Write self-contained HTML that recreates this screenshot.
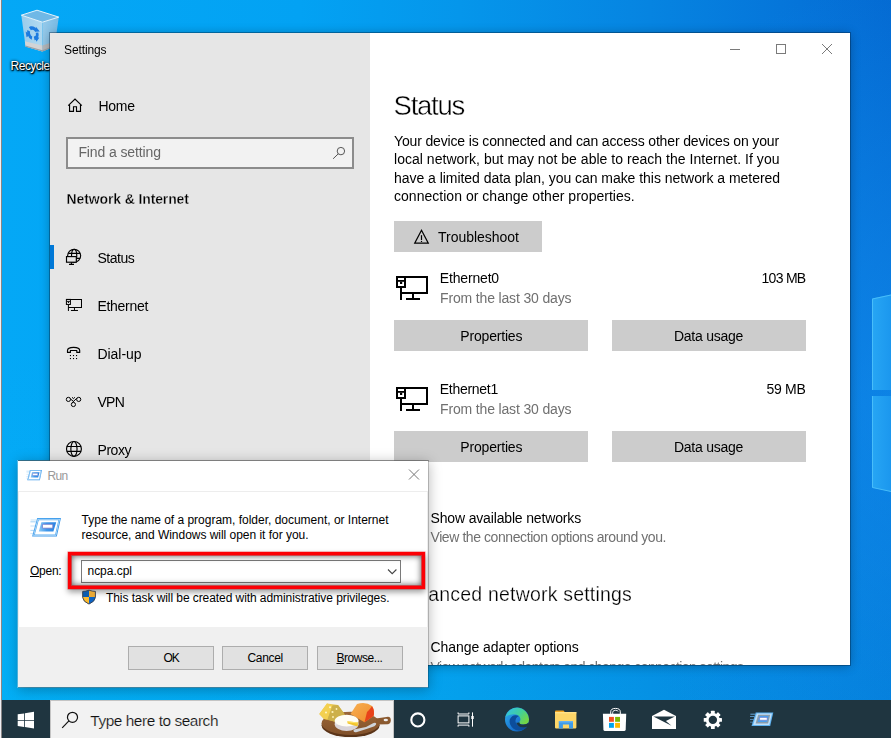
<!DOCTYPE html>
<html><head><meta charset="utf-8"><title>Desktop</title>
<style>
*{box-sizing:border-box;margin:0;padding:0}
html,body{width:891px;height:738px;overflow:hidden}
body{position:relative;font-family:"Liberation Sans",sans-serif;background:#0590e8}
.abs{position:absolute}
.t{position:absolute;white-space:pre;line-height:1;font-family:"Liberation Sans",sans-serif}
#wall{left:0;top:0;width:891px;height:700px;background:linear-gradient(90deg,#04a8f6 0px,#03a2f3 300px,#0596eb 460px,#0684e1 650px,#0574d9 800px,#046ad2 891px)}
#wall2{left:0;top:0;width:891px;height:700px;background:linear-gradient(180deg,rgba(0,0,0,0) 0px,rgba(0,0,0,0) 350px,rgba(0,200,240,0.20) 700px)}
#edge0{left:0;top:0;width:1px;height:738px;background:#f0f0f4}
#edge1{left:1px;top:0;width:1px;height:738px;background:#8a8686}
.pane{background:linear-gradient(90deg,#2aa4f3,#1e98ee);border-left:1px solid #4fc0fa;border-top:1px solid #3fb2f6}
/* Settings window */
#win{left:50px;top:33px;width:800px;height:632px;background:#fff;box-shadow:0 1px 10px rgba(0,0,0,.30),0 0 0 1px rgba(0,30,60,.36);overflow:hidden}
#side{left:0;top:0;width:320px;height:632px;background:#e6e6e6}
#winT{left:0;top:0;width:891px;height:665px;overflow:hidden;clip-path:inset(33px 41px 0px 50px);filter:grayscale(1)}
.btn{background:#ccc}
#sbox{left:66px;top:137px;width:288px;height:31.500px;border:2px solid #8c8c8c;background:#f2f2f2}
/* Run dialog */
#run{left:18px;top:460px;width:411px;padding-left:1px;height:228px;background:#fff;background-clip:padding-box;border:1px solid rgba(0,0,0,.20);border-top-color:rgba(0,0,0,.40);border-left:0;box-shadow:0 2px 12px rgba(0,0,0,.27),-1px 0 0 rgba(255,255,255,.35)}
#runfoot{left:0;top:166px;width:410px;height:60px;background:#f0f0f0}
.rb{background:#e1e1e1;border:1px solid #adadad;height:23.500px;top:646px}
#task{left:0;top:700px;width:891px;height:39px;background:#1f3540}
#tsearch{left:50px;top:0;width:344px;height:39px;background:#f2f2f2;border:1px solid #c4c4c4;border-bottom:0}
</style></head><body>
<div id="wall" class="abs"></div>
<div id="wall2" class="abs"></div>
<div class="abs" style="left:0;top:0;width:891px;height:700px;background:radial-gradient(ellipse 330px 420px at 900px 400px,rgba(20,150,245,.55) 0,rgba(20,150,245,.35) 40%,rgba(20,150,245,0) 100%)"></div>
<svg class="abs" style="left:860px;top:280px" width="31" height="220" viewBox="860 280 31 220"><defs><linearGradient id="pn" x1="0" y1="0" x2="1" y2="0"><stop offset="0" stop-color="#27a6f4"/><stop offset="1" stop-color="#1b97ee"/></linearGradient></defs><polygon points="872,298.600 891,294.500 891,390 872,390" fill="url(#pn)"/><polygon points="872,396 891,396 891,491.500 872,487.500" fill="url(#pn)"/><path d="M872.500 390V299L891 295M872.500 396V487.500L891 491.500" fill="none" stroke="#48bdf9" stroke-width="1"/></svg>
<svg class="abs" style="left:0;top:0" width="80" height="60" viewBox="0 0 80 60">
  <defs>
    <linearGradient id="rbL" x1="0" y1="0" x2="1" y2="0"><stop offset="0" stop-color="#9fcdea"/><stop offset="1" stop-color="#b9dcf1"/></linearGradient>
    <linearGradient id="rbR" x1="0" y1="0" x2="1" y2="0"><stop offset="0" stop-color="#9ccbe9"/><stop offset="1" stop-color="#7dbbe3"/></linearGradient>
  </defs>
  <polygon points="21.3,15.2 37,10.2 58.8,17.1 42.4,22.2" fill="#6fb8e6"/>
  <polygon points="21.3,15.2 42.4,22.2 42.4,51.5 25.6,46.6" fill="url(#rbL)" opacity=".96"/>
  <polygon points="42.4,22.2 58.8,17.1 54.6,46.6 42.4,51.5" fill="url(#rbR)" opacity=".96"/>
  <polygon points="24.8,41.3 42.4,45.6 42.4,51.5 25.6,46.6" fill="#d2d4d6"/>
  <polygon points="42.4,45.6 55.3,41.3 54.6,46.6 42.4,51.5" fill="#b4b8bc"/>
  <polygon points="25.4,45.6 42.4,50.3 54.7,45.6 54.6,46.6 42.4,51.6 25.6,46.7" fill="#9aa0a6"/>
  <polyline points="21.3,15.2 37,10.2 58.8,17.1 42.4,22.2 21.3,15.2" fill="none" stroke="#e4f2fa" stroke-width="1"/>
  <g transform="translate(32.900 33.300) skewY(15) scale(.95 1.120)">
    <circle r="4.600" fill="none" stroke="#1c7be0" stroke-width="3" stroke-dasharray="7.300 2.330" transform="rotate(-20)"/>
    <g fill="#1c7be0"><polygon points="3.200,-6.600 7.200,-3.200 2.200,-1.800" /><polygon points="-7.600,0.800 -2.600,2.200 -6.200,5.600" transform="rotate(5)"/><polygon points="2.800,7.200 1.200,2.200 6.300,3.400" transform="rotate(-8)"/></g>
  </g>
</svg>

<span class="t" style="left:10.60px;top:59px;line-height:14px;font-size:12.00px;color:#fff;font-weight:400;letter-spacing:-0.524px;text-shadow:0 1px 2px #000,0 0 3px #000,1px 1px 1px #000">Recycle Bin</span>

<div id="win" class="abs">
  <div id="side" class="abs"></div>
  <div class="abs" style="left:0;top:212px;width:4px;height:24px;background:#0078d7"></div>
</div>
<div id="winT" class="abs">
  <div id="sbox" class="abs"></div>
  <div class="abs btn" style="left:394px;top:221px;width:148px;height:31px"></div>
  <div class="abs btn" style="left:394px;top:320px;width:194px;height:31px"></div>
  <div class="abs btn" style="left:612px;top:320px;width:194px;height:31px"></div>
  <div class="abs btn" style="left:394px;top:431px;width:194px;height:31px"></div>
  <div class="abs btn" style="left:612px;top:431px;width:194px;height:31px"></div>
  <svg class="abs" style="left:0;top:0" width="891" height="664" viewBox="0 0 891 664">
  <defs>
    <g id="eth"><!-- 32x24 ethernet glyph -->
      <path d="M1 1H31V17H5" fill="none" stroke="#000" stroke-width="2"/>
      <rect x="1" y="1" width="8" height="10" fill="none" stroke="#000" stroke-width="2"/>
      <rect x="2" y="4" width="6" height="1.800" fill="#000"/>
      <rect x="4" y="5.800" width="2.200" height="2.200" fill="#000"/>
      <rect x="4" y="12" width="2" height="12" fill="#000"/>
      <rect x="16" y="18" width="2" height="4.200" fill="#000"/>
      <rect x="10" y="22" width="14" height="2" fill="#000"/>
    </g>
  </defs>
  <!-- window controls -->
  <g stroke="#7a7a7a" stroke-width="1" fill="none">
    <path d="M730 49.500H740"/>
    <rect x="776.500" y="44.500" width="9" height="9"/>
    <path d="M822 44L832 54M832 44L822 54"/>
  </g>
  <!-- home -->
  <g fill="none" stroke="#000" stroke-width="1.150">
    <path d="M68.200 105.700L75 99L81.800 105.700"/>
    <path d="M69.550 104.700V111.400H73.500V106.700H76.500V111.400H80.500V104.700"/>
  </g>
  <!-- search glyph in Find a setting -->
  <g fill="none" stroke="#555" stroke-width="1">
    <circle cx="340.900" cy="151.100" r="3.700"/>
    <path d="M338.200 153.900L333.100 158.800"/>
  </g>
  <!-- status icon -->
  <g fill="none" stroke="#000" stroke-width="1.150">
    <circle cx="74.150" cy="255.800" r="6.500"/>
    <ellipse cx="74.150" cy="255.800" rx="2.600" ry="6.500"/>
    <path d="M68.300 253.300H80M76 258.400H80.200"/>
    <rect x="66.500" y="256.600" width="9.800" height="5.600" fill="#e6e6e6"/>
    <path d="M71.400 262.200V264.400M69 264.400H74"/>
  </g>
  <!-- ethernet (sidebar) -->
  <use href="#eth" transform="translate(65.900 298.900) scale(0.503)"/>
  <!-- dial-up -->
  <g>
    <path d="M67.500 352.400V350.400C67.500 348.300 70.500 347.300 73.600 347.300C76.700 347.300 79.700 348.300 79.700 350.400V352.400H76.800V350.500H70.400V352.400Z" fill="none" stroke="#000" stroke-width="1.150" stroke-linejoin="round"/>
    <g fill="#000"><rect x="69.900" y="355" width="1.100" height="1.100"/><rect x="72.950" y="355" width="1.100" height="1.100"/><rect x="76" y="355" width="1.100" height="1.100"/>
    <rect x="69.900" y="358" width="1.100" height="1.100"/><rect x="72.950" y="358" width="1.100" height="1.100"/><rect x="76" y="358" width="1.100" height="1.100"/></g>
  </g>
  <!-- vpn -->
  <g fill="none" stroke="#000" stroke-width="1">
    <circle cx="68.400" cy="399.400" r="2.100"/>
    <circle cx="78.700" cy="399.400" r="2.100"/>
    <circle cx="73.400" cy="404.500" r="2.100"/>
    <path d="M70.400 398.900L73.400 401.300M76.800 398.200L72 402.900M72 397.300L73.450 398.600L74.900 397.300"/>
  </g>
  <!-- proxy -->
  <g fill="none" stroke="#000" stroke-width="1.150">
    <circle cx="73.950" cy="448.950" r="7.450"/>
    <ellipse cx="73.950" cy="448.950" rx="3.100" ry="7.450"/>
    <path d="M66.900 446.450H81M66.900 451.350H81"/>
  </g>
  <!-- warning -->
  <g fill="none" stroke="#000" stroke-width="1.200">
    <path d="M421.500 230.200L428.300 243.200H414.700Z"/>
    <path d="M421.500 235.200V240"/><path d="M421.500 240.900V242"/>
  </g>
  <use href="#eth" transform="translate(396 276)"/>
  <use href="#eth" transform="translate(396 387)"/>
</svg>

<span class="t" style="left:64.00px;top:43px;line-height:14px;font-size:12.00px;color:#000;font-weight:400;letter-spacing:-0.107px;">Settings</span>
<span class="t" style="left:98.40px;top:98px;line-height:16px;font-size:14.00px;color:#000;font-weight:400;letter-spacing:-0.265px;">Home</span>
<span class="t" style="left:78.40px;top:144px;line-height:16px;font-size:14.00px;color:#666;font-weight:400;letter-spacing:-0.104px;">Find a setting</span>
<span class="t" style="left:66.50px;top:191px;line-height:16px;font-size:14.00px;color:#000;font-weight:700;letter-spacing:-0.120px;-webkit-text-stroke:0.3px #e6e6e6;">Network &amp; Internet</span>
<span class="t" style="left:97.50px;top:250px;line-height:16px;font-size:14.00px;color:#000;font-weight:400;letter-spacing:-0.501px;">Status</span>
<span class="t" style="left:97.50px;top:298px;line-height:16px;font-size:14.00px;color:#000;font-weight:400;letter-spacing:-0.305px;">Ethernet</span>
<span class="t" style="left:97.50px;top:346px;line-height:16px;font-size:14.00px;color:#000;font-weight:400;letter-spacing:-0.051px;">Dial-up</span>
<span class="t" style="left:97.50px;top:394px;line-height:16px;font-size:14.00px;color:#000;font-weight:400;letter-spacing:-0.766px;">VPN</span>
<span class="t" style="left:97.50px;top:442px;line-height:16px;font-size:14.00px;color:#000;font-weight:400;letter-spacing:-0.459px;">Proxy</span>
<span class="t" style="left:393.60px;top:90px;line-height:31px;font-size:27.50px;color:#000;font-weight:400;letter-spacing:-1.261px;-webkit-text-stroke:0.45px #fff;">Status</span>
<span class="t" style="left:394.00px;top:133px;line-height:16px;font-size:14.00px;color:#000;font-weight:400;letter-spacing:-0.149px;">Your device is connected and can access other devices on your</span>
<span class="t" style="left:394.00px;top:151px;line-height:16px;font-size:14.00px;color:#000;font-weight:400;letter-spacing:0.029px;">local network, but may not be able to reach the Internet. If you</span>
<span class="t" style="left:394.00px;top:170px;line-height:16px;font-size:14.00px;color:#000;font-weight:400;letter-spacing:-0.038px;">have a limited data plan, you can make this network a metered</span>
<span class="t" style="left:394.00px;top:188px;line-height:16px;font-size:14.00px;color:#000;font-weight:400;letter-spacing:0.028px;">connection or change other properties.</span>
<span class="t" style="left:438.00px;top:229px;line-height:16px;font-size:14.00px;color:#000;font-weight:400;letter-spacing:-0.017px;">Troubleshoot</span>
<span class="t" style="left:439.80px;top:270px;line-height:16px;font-size:14.00px;color:#000;font-weight:400;letter-spacing:-0.169px;">Ethernet0</span>
<span class="t" style="left:440.00px;top:290px;line-height:16px;font-size:14.00px;color:#707070;font-weight:400;letter-spacing:-0.154px;">From the last 30 days</span>
<span class="t" style="left:761.50px;top:270px;line-height:16px;font-size:14.00px;color:#000;font-weight:400;letter-spacing:-0.708px;">103 MB</span>
<span class="t" style="left:460.30px;top:328px;line-height:16px;font-size:14.00px;color:#000;font-weight:400;letter-spacing:-0.181px;">Properties</span>
<span class="t" style="left:674.00px;top:328px;line-height:16px;font-size:14.00px;color:#000;font-weight:400;letter-spacing:-0.261px;">Data usage</span>
<span class="t" style="left:439.80px;top:381px;line-height:16px;font-size:14.00px;color:#000;font-weight:400;letter-spacing:-0.280px;">Ethernet1</span>
<span class="t" style="left:440.00px;top:401px;line-height:16px;font-size:14.00px;color:#707070;font-weight:400;letter-spacing:-0.154px;">From the last 30 days</span>
<span class="t" style="left:766.50px;top:381px;line-height:16px;font-size:14.00px;color:#000;font-weight:400;letter-spacing:-0.294px;">59 MB</span>
<span class="t" style="left:460.30px;top:439px;line-height:16px;font-size:14.00px;color:#000;font-weight:400;letter-spacing:-0.181px;">Properties</span>
<span class="t" style="left:674.00px;top:439px;line-height:16px;font-size:14.00px;color:#000;font-weight:400;letter-spacing:-0.261px;">Data usage</span>
<span class="t" style="left:430.50px;top:510px;line-height:16px;font-size:14.00px;color:#000;font-weight:400;letter-spacing:-0.156px;">Show available networks</span>
<span class="t" style="left:430.50px;top:529px;line-height:16px;font-size:14.00px;color:#707070;font-weight:400;letter-spacing:-0.421px;">View the connection options around you.</span>
<span class="t" style="left:394.00px;top:583px;line-height:22px;font-size:19.50px;color:#000;font-weight:400;letter-spacing:0.198px;-webkit-text-stroke:0.25px #fff;">Advanced network settings</span>
<span class="t" style="left:430.40px;top:639px;line-height:16px;font-size:14.00px;color:#000;font-weight:400;letter-spacing:-0.048px;">Change adapter options</span>
<span class="t" style="left:430.50px;top:659px;line-height:16px;font-size:14.00px;color:#707070;font-weight:400;letter-spacing:-0.564px;">View network adapters and change connection settings.</span>
</div>

<div id="run" class="abs"><div class="abs" style="left:0;top:30px;width:410px;height:196px;border:1px solid #ededed;border-bottom:0"></div><div id="runfoot" class="abs"></div></div>
<div id="runT" class="abs" style="left:0;top:0;width:891px;height:738px">
  <div class="abs" style="left:81px;top:560px;width:320px;height:23px;border:1px solid #7a7a7a;background:#fff"></div>
  <div class="abs" style="left:68px;top:552px;width:356.500px;height:37px;border:3px solid #fc0005;box-shadow:0 3px 6px rgba(0,0,0,.40),0 0 0 .500px rgba(252,0,5,.5),inset 0 0 0 1px rgba(230,0,5,.55),inset 0 0 6px 1px rgba(0,0,0,.62)"></div>
  <div class="abs rb" style="left:128px;width:86px"></div>
  <div class="abs rb" style="left:222px;width:85.500px"></div>
  <div class="abs rb" style="left:317px;width:85.500px"></div>
  <svg class="abs" style="left:0;top:0" width="440" height="700" viewBox="0 0 440 700">
  <defs>
    <linearGradient id="rg1" x1="0" y1="0" x2="1" y2="1"><stop offset="0" stop-color="#4fa9f0"/><stop offset="1" stop-color="#3592e8"/></linearGradient>
    <linearGradient id="rg2" x1="0" y1="0" x2="1" y2="0"><stop offset="0" stop-color="#8ccaf7"/><stop offset=".45" stop-color="#3f97ea"/><stop offset="1" stop-color="#2a84e2"/></linearGradient>
    <g id="runico"><!-- designed at big size: origin (30,518) size ~31x19 -->
      <g stroke="#9fd0f6" stroke-width="1.100">
        <path d="M0.600 2H6.500" opacity=".55"/><path d="M0.400 3.800H5.800" opacity=".9"/><path d="M0.400 8H5" opacity=".6"/><path d="M0.400 12.400H4" opacity=".8"/><path d="M0.400 15.500H3" opacity=".45"/>
      </g>
      <polygon points="7.150,0.100 31,0.100 26.800,18.600 2.100,18.600" fill="url(#rg1)"/>
      <polygon points="7.830,1 29.860,1 26.080,17.700 3.280,17.700" fill="#d6ebfb"/><polygon points="8.210,1.500 29.220,1.500 25.680,17.200 3.930,17.200" fill="#58abef"/><polygon points="8.750,2.200 28.330,2.200 25.120,16.500 4.850,16.500" fill="#fff"/>
      
      <polygon points="11.400,4.300 26.200,4.300 23.400,13.600 8.800,13.600" fill="url(#rg2)"/>
      <rect x="12.400" y="6.300" width="10.400" height="3.900" rx=".8" fill="#fff" stroke="#6b70c8" stroke-width=".8"/>
    </g>
  </defs>
  <!-- title icon -->
  <use href="#runico" transform="translate(26.200 469.900) scale(0.51 0.55)"/>
  <!-- close X -->
  <path d="M409 469.500L419 479.500M419 469.500L409 479.500" stroke="#777" stroke-width="1" fill="none"/>
  <!-- big icon -->
  <use href="#runico" transform="translate(30 518)"/>
  <!-- combo chevron -->
  <path d="M388 569.500L392.200 573.700L396.400 569.500" stroke="#444" stroke-width="1.100" fill="none"/>
  <!-- shield -->
  <g>
    <path d="M82.700 591.400Q86 591.300 89 590.200Q92 591.300 95.400 591.400V597.500Q95 601.500 89 604.100Q83 601.500 82.700 597.500Z" fill="#0b63c4"/>
    <path d="M89 590.200Q92 591.300 95.400 591.400V596.900H89Z" fill="#e9a936"/>
    <path d="M82.700 596.900H89V604.100Q83 601.500 82.700 597.500Z" fill="#fdba2d"/>
    <path d="M82.700 591.400Q86 591.300 89 590.200V596.900H82.700Z" fill="#0b5cb0"/>
    <path d="M82.700 591.400Q86 591.300 89 590.200Q92 591.300 95.400 591.400V597.500Q95 601.500 89 604.100Q83 601.500 82.700 597.500Z" fill="none" stroke="#3c4048" stroke-width=".9"/>
  </g>
</svg>

<span class="t" style="left:47.40px;top:469px;line-height:14px;font-size:12.00px;color:#999;font-weight:400;letter-spacing:-0.639px;">Run</span>
<span class="t" style="left:81.60px;top:513px;line-height:14px;font-size:12.00px;color:#000;font-weight:400;letter-spacing:-0.011px;">Type the name of a program, folder, document, or Internet</span>
<span class="t" style="left:81.60px;top:528px;line-height:14px;font-size:12.00px;color:#000;font-weight:400;letter-spacing:-0.028px;">resource, and Windows will open it for you.</span>
<span class="t" style="left:30.00px;top:564px;line-height:14px;font-size:12.00px;color:#000;font-weight:400;letter-spacing:-0.261px;"><u>O</u>pen:</span>
<span class="t" style="left:87.50px;top:564px;line-height:14px;font-size:12.00px;color:#000;font-weight:400;letter-spacing:-0.025px;">ncpa.cpl</span>
<span class="t" style="left:106.00px;top:591px;line-height:14px;font-size:12.00px;color:#000;font-weight:400;letter-spacing:-0.071px;">This task will be created with administrative privileges.</span>
<span class="t" style="left:163.50px;top:651px;line-height:14px;font-size:12.00px;color:#000;font-weight:400;letter-spacing:-1.172px;">OK</span>
<span class="t" style="left:247.40px;top:651px;line-height:14px;font-size:12.00px;color:#000;font-weight:400;letter-spacing:-0.293px;">Cancel</span>
<span class="t" style="left:336.50px;top:651px;line-height:14px;font-size:12.00px;color:#000;font-weight:400;letter-spacing:-0.459px;"><u>B</u>rowse...</span>
</div>

<div id="task" class="abs">
  <div id="tsearch" class="abs"></div>
</div>
<div id="taskT" class="abs" style="left:0;top:0;width:891px;height:738px">
  <svg class="abs" style="left:0;top:0" width="891" height="738" viewBox="0 0 891 738">
  <defs>
    <linearGradient id="eg1" x1="0" y1="0" x2="1" y2="1"><stop offset="0" stop-color="#2fb6ee"/><stop offset=".55" stop-color="#1b78d4"/><stop offset="1" stop-color="#0d55a2"/></linearGradient>
    <linearGradient id="eg2" x1="0" y1="0" x2="1" y2=".6"><stop offset="0" stop-color="#2fc0f0"/><stop offset=".6" stop-color="#42cf9a"/><stop offset="1" stop-color="#74d545"/></linearGradient>
    <linearGradient id="wood" x1="0" y1="0" x2="0" y2="1"><stop offset="0" stop-color="#9b6738"/><stop offset="1" stop-color="#80502a"/></linearGradient>
    <linearGradient id="chO" x1="0" y1="0" x2="1" y2="1"><stop offset="0" stop-color="#f7b052"/><stop offset="1" stop-color="#f08a2a"/></linearGradient>
    <linearGradient id="chY" x1="0" y1="0" x2="1" y2="1"><stop offset="0" stop-color="#f5d25a"/><stop offset="1" stop-color="#c9a83a"/></linearGradient>
  </defs>
  <!-- start logo -->
  <g fill="#fff">
    <polygon points="17.700,714.300 24.100,713.400 24.100,719.900 17.700,719.900"/>
    <polygon points="24.900,713.300 34,711.800 34,719.900 24.900,719.900"/>
    <polygon points="17.700,720.700 24.100,720.700 24.100,727 17.700,726.100"/>
    <polygon points="24.900,720.700 34,720.700 34,728.400 24.900,727.100"/>
  </g>
  <!-- search glyph -->
  <g fill="none" stroke="#111" stroke-width="1.200">
    <circle cx="72.500" cy="717.350" r="5.050"/>
    <path d="M68.900 720.950L62.200 727.800"/>
  </g>
  <!-- cheese board -->
  <g>
    <ellipse cx="350.600" cy="725.300" rx="29" ry="11.800" fill="#5a3418"/>
    <ellipse cx="350.600" cy="723.300" rx="29" ry="11.600" fill="url(#wood)"/>
    <path d="M376 718.600L388 716.800Q391 717 390.800 720.500Q390.600 723.800 388 724.300L376 724.600Z" fill="#8b5a30"/>
    <ellipse cx="385.800" cy="720" rx="2.200" ry="1.300" fill="#eee"/>
    <!-- swiss -->
    <polygon points="319.300,714 327,703.600 338,705 344.800,714.500 335,721.800 324,719" fill="url(#chY)"/>
    <polygon points="319.300,714 327,703.600 332.500,705.500 327.500,719.500 324,719" fill="#f3d050"/>
    <polygon points="332.500,705.500 338,705 344.800,714.500 335,721.800 327.500,719.500" fill="#cdb04a"/>
    <circle cx="330" cy="707.200" r="1" fill="#fff6c8"/><circle cx="326" cy="712.500" r="1" fill="#fff6c8"/><circle cx="332.500" cy="712" r="1.100" fill="#fff3b8"/><circle cx="336.500" cy="709" r=".9" fill="#fff3b8"/><circle cx="333" cy="717" r=".9" fill="#fff3b8"/>
    <!-- orange wedge -->
    <path d="M350.500 714L357 704Q366 701.500 372 706Q375 711 373.500 716L364.500 722.300Z" fill="url(#chO)"/>
    <path d="M372 706Q375 711 373.500 716L364.500 722.300L367 712Q371 708 372 706Z" fill="#e8421b"/>
    <!-- brie -->
    <ellipse cx="346.600" cy="724.600" rx="11.800" ry="6.300" fill="#d9d4d8"/>
    <rect x="334.800" y="720.500" width="23.600" height="4.200" fill="#e6e2e4"/>
    <ellipse cx="346.600" cy="720.600" rx="11.800" ry="5.800" fill="#fffdf4"/>
    <polygon points="347.400,721.200 358.200,722.600 357.600,726.400 347.600,723.600" fill="#f2c52e"/>
    <polygon points="347.400,721.200 358.200,722.600 358.200,723.400 347.400,722.200" fill="#ffe36a"/>
    <!-- knife -->
    <path d="M353.600 731.300Q353 729.600 356 729L366 727L373 723.200Q375.500 722.200 376.200 723.600Q376.600 725 374.400 726.200L366.500 729L357 732Q354.200 732.600 353.600 731.300Z" fill="#cfd3d8"/>
  </g>
  <!-- cortana -->
  <circle cx="417.850" cy="719.900" r="6.550" fill="none" stroke="#fff" stroke-width="2.100"/>
  <!-- task view -->
  <g fill="none" stroke="#fff" stroke-width="1">
    <rect x="458.100" y="715.900" width="10.800" height="7"/>
    <path d="M458.100 712.400V714H468.900V712.400"/>
    <path d="M458.100 726.700V725.100H468.900V726.700"/>
    <path d="M472.500 712.400V726.700"/>
  </g>
  <rect x="471.300" y="716" width="2.400" height="3" fill="#fff"/>
  <!-- edge -->
  <g>
    <circle cx="517" cy="719.600" r="12" fill="url(#eg1)"/>
    <path d="M505.300 717.200A12 12 0 0 1 529 719.200Q529.200 724.600 523.500 724.600Q519.200 724.400 519.300 722.200Q520.600 720.800 520.400 718.800Q519.600 714.200 513.500 714.200Q507.500 714.600 505.300 717.200Z" fill="url(#eg2)"/>
    <path d="M512.200 716.200Q508.200 719.200 510.200 724.600Q512.600 730 518.800 730.600Q524 730.400 527.400 726.600Q523.200 728.600 519 726.400Q514.200 723.200 516 718.600Q517 716.600 519 716.100Q515.200 714.600 512.200 716.200Z" fill="#0c4d9c"/>
    <path d="M519.300 722.200Q519.200 724.400 523.500 724.600Q527 724.600 528.400 722.800L528.600 725.400Q527.600 727 527.400 726.600Q523.200 728.600 519 726.400Q516.800 724.600 516.200 722.800Q517.600 723 519.300 722.200Z" fill="#1f3540"/>
  </g>
  <!-- explorer -->
  <g>
    <path d="M555 711.400Q555 710.600 556 710.600H563Q564 710.600 564.300 711.600L564.600 713.200H555Z" fill="#f0a31e"/>
    <rect x="555" y="712" width="21.400" height="16.400" rx=".8" fill="#fdd668"/>
    <rect x="555" y="712" width="21.400" height="1.400" fill="#ffe28a"/>
    <path d="M558.800 728.500V722Q558.800 721 559.800 721H572Q573 721 573 722V728.500H569V724.400H562.900V728.500Z" fill="#3f9be8"/>
    <rect x="558.800" y="721" width="14.200" height="1.500" fill="#62b2f2"/>
  </g>
  <!-- store -->
  <g>
    <path d="M610.700 714V711.800Q610.700 708.400 615.500 708.400Q620.300 708.400 620.300 711.800V714" fill="none" stroke="#fff" stroke-width="1"/>
    <path d="M612.700 714V712.400Q612.700 710.300 615.500 710.300Q617.500 710.300 618.300 711.400" fill="none" stroke="#fff" stroke-width=".9"/>
    <path d="M602.900 713.700H626.200L625.700 729.500Q625.600 731.100 624 731.100H605.100Q603.500 731.100 603.400 729.500Z" fill="#fff"/>
    <rect x="609" y="716.900" width="4.900" height="4.900" fill="#f25022"/>
    <rect x="615.100" y="716.900" width="4.900" height="4.900" fill="#7fba00"/>
    <rect x="609" y="722.900" width="4.900" height="4.900" fill="#00a4ef"/>
    <rect x="615.100" y="722.900" width="4.900" height="4.900" fill="#ffb900"/>
  </g>
  <!-- mail -->
  <g>
    <path d="M652 716L664 709.800L676 716V728.900H652Z" fill="#fff"/>
    <path d="M653.400 716.400H674.900L665.900 720.900L671.500 725.800Z" fill="#1f3540"/>
  </g>
  <!-- gear -->
  <g transform="translate(712.850 719.900)">
    <g fill="#fff">
      <rect x="-1.900" y="-9.100" width="3.800" height="18.200" rx=".5"/>
      <rect x="-1.900" y="-9.100" width="3.800" height="18.200" rx=".5" transform="rotate(45)"/>
      <rect x="-1.900" y="-9.100" width="3.800" height="18.200" rx=".5" transform="rotate(90)"/>
      <rect x="-1.900" y="-9.100" width="3.800" height="18.200" rx=".5" transform="rotate(135)"/>
      <circle r="7"/>
    </g>
    <circle r="4.200" fill="#1f3540"/>
  </g>
  <!-- run (taskbar) -->
  <g>
    <g stroke="#6fb4ee" stroke-width=".9"><path d="M750.400 714.200H755"/><path d="M750 716.500H754.400" opacity=".8"/><path d="M750 719.500H753.600" opacity=".7"/><path d="M750 722.200H753" opacity=".6"/></g>
    <polygon points="755.700,712.400 773.300,712.400 770.200,726.100 751.500,726.100" fill="#5fb3f2"/>
    <polygon points="756.800,713.500 771.900,713.500 769.300,725 753.100,725" fill="#bfe0fa"/>
    <polygon points="758.200,714.800 770.200,714.800 768.100,723.600 755.600,723.600" fill="#8b9cab"/>
    <polygon points="759.600,716 768.600,716 767,722 757.600,722" fill="#4b9fec"/>
    <rect x="759.600" y="717.400" width="7.600" height="2.800" rx=".5" fill="#fff" stroke="#6b70c8" stroke-width=".6"/>
  </g>
</svg>

<span class="t" style="left:90.30px;top:712px;line-height:17px;font-size:15.40px;color:#111;font-weight:400;letter-spacing:-0.438px;-webkit-text-stroke:0.18px #f2f2f2;">Type here to search</span>
</div>
<div id="edge0" class="abs"></div><div id="edge1" class="abs"></div>
</body></html>
